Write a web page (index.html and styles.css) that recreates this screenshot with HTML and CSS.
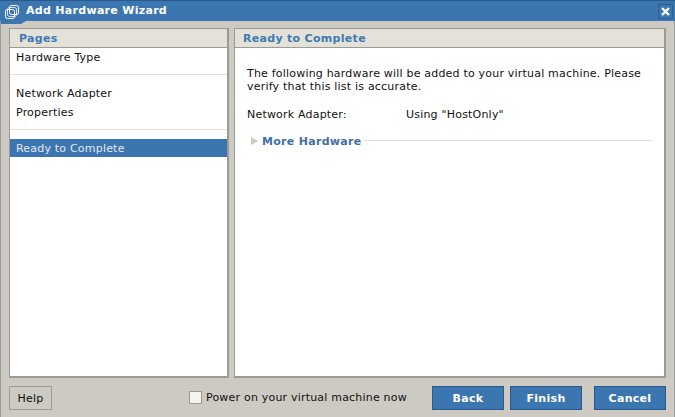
FILE: index.html
```html
<!DOCTYPE html>
<html lang="en">
<head>
  <meta charset="UTF-8">
  <title>Add Hardware Wizard</title>
  <link rel="stylesheet" href="styles.css">
</head>
<body>
  <div class="wizard">
    <div class="titlebar">
      <svg class="title-icon" width="15" height="15" viewBox="0 0 15 15">
        <rect x="0.5" y="4.5" width="9" height="9" rx="2" fill="none" stroke="#fff"/>
        <rect x="4.5" y="0.5" width="9" height="9" rx="2" fill="none" stroke="#fff"/>
        <rect x="2.5" y="2.5" width="9" height="9" rx="2" fill="none" stroke="#dfe8f2"/>
      </svg>
      <span class="title-text">Add Hardware Wizard</span>
      <span class="close-btn">
        <svg width="11" height="11" viewBox="0 0 11 11">
          <path d="M2 2 L9 9 M9 2 L2 9" stroke="#fff" stroke-width="2.4"/>
        </svg>
      </span>
    </div>
    <div class="title-notch"></div>

    <div class="panels">
      <div class="panel pages">
        <div class="panel-head">Pages</div>
        <div class="page-group group-type">
          <div class="page-item">Hardware Type</div>
        </div>
        <div class="page-group group-adapter">
          <div class="page-item">Network Adapter</div>
          <div class="page-item">Properties</div>
        </div>
        <div class="page-item selected">Ready to Complete</div>
      </div>

      <div class="panel content">
        <div class="panel-head head-right">Ready to Complete</div>
        <div class="content-body">
          <p class="intro">The following hardware will be added to your virtual machine. Please verify that this list is accurate.</p>
          <div class="summary-row">
            <span class="summary-label">Network Adapter:</span>
            <span>Using "HostOnly"</span>
          </div>
          <div class="more-row">
            <span class="more-arrow"></span>
            <span class="more-label">More Hardware</span>
            <span class="more-line"></span>
          </div>
        </div>
      </div>
    </div>

    <div class="footer">
      <button class="btn btn-help">Help</button>
      <label class="power-on">
        <span class="checkbox"></span>
        Power on your virtual machine now
      </label>
      <button class="btn btn-blue">Back</button>
      <button class="btn btn-blue btn-finish">Finish</button>
      <button class="btn btn-blue">Cancel</button>
    </div>
  </div>
</body>
</html>
```

FILE: styles.css
```css
html, body {
  margin: 0;
  padding: 0;
  height: 100%;
}
body {
  background: #cdcac3;
  font-family: "DejaVu Sans", Verdana, sans-serif;
  font-size: 11px;
  letter-spacing: 0.2px;
  color: #111;
  overflow: hidden;
}
.wizard {
  display: flex;
  flex-direction: column;
  height: 417px;
  box-sizing: border-box;
  border-left: 1px solid #9a9a96;
  border-right: 1px solid #9a9a96;
  position: relative;
}

/* title bar */
.titlebar {
  display: flex;
  align-items: center;
  height: 20px;
  margin: 0 -1px;
  background: #3c76b1;
  border-top: 1px solid #2a5a8c;
  color: #fff;
  font-weight: bold;
  font-size: 11px;
  padding-left: 5px;
}
.title-icon {
  margin-right: 6px;
  margin-top: 3px;
  flex: none;
}
.title-text {
  flex: 1;
  letter-spacing: 0.3px;
  margin-top: -2px;
}
.close-btn {
  display: flex;
  align-items: center;
  justify-content: center;
  width: 15px;
  height: 15px;
  margin-right: 2px;
  border: 1px solid #2d5f92;
  box-sizing: border-box;
}
.title-notch {
  position: absolute;
  left: 0;
  top: 21px;
  width: 25px;
  height: 3px;
  background: #3c76b1;
  clip-path: polygon(0 0, 100% 0, 80% 100%, 0 100%);
}

/* panels */
.panels {
  display: flex;
  gap: 5px;
  height: 350px;
  margin: 7px 8px 0 8px;
}
.panel {
  background: #fff;
  border: 2px solid #9a9a96;
  border-width: 1px 2px 2px 1px;
  box-sizing: border-box;
}
.pages {
  width: 220px;
  flex: none;
}
.content {
  flex: 1;
}
.panel-head {
  height: 18px;
  line-height: 19px;
  background: #e4e1d9;
  border-bottom: 1px solid #9a9a96;
  color: #4179b3;
  font-weight: bold;
  letter-spacing: 0.3px;
  padding-left: 9px;
}
.head-right {
  padding-left: 8px;
}

/* page list */
.page-item {
  height: 19px;
  line-height: 19px;
  padding-left: 6px;
}
.page-group {
  border-bottom: 1px solid #e4e1d9;
}
.group-type {
  padding-bottom: 7px;
  margin-bottom: 9px;
}
.group-adapter {
  padding-bottom: 7px;
  margin-bottom: 9px;
}
.page-item.selected {
  height: 18px;
  line-height: 19px;
  background: #3c76b1;
  color: #e4e8ee;
}

/* right side */
.content-body {
  padding: 19px 12px 0 12px;
}
.intro {
  margin: 0;
  line-height: 13px;
}
.summary-row {
  display: flex;
  margin-top: 15px;
  line-height: 14px;
}
.summary-label {
  width: 159px;
}
.more-row {
  display: flex;
  align-items: center;
  margin-top: 12px;
  margin-right: -1px;
  height: 14px;
}
.more-arrow {
  width: 0;
  height: 0;
  margin-left: 4px;
  margin-right: 4px;
  border-left: 7px solid #cdcac3;
  border-top: 4px solid transparent;
  border-bottom: 4px solid transparent;
}
.more-label {
  color: #3f6fa3;
  font-weight: bold;
  letter-spacing: 0.3px;
}
.more-line {
  flex: 1;
  height: 1px;
  margin-left: 1px;
  margin-top: -1px;
  background: #e4e1d9;
}

/* footer */
.footer {
  display: flex;
  align-items: center;
  margin: 8px 8px 0 8px;
}
.btn {
  height: 24px;
  box-sizing: border-box;
  font-family: "DejaVu Sans", Verdana, sans-serif;
  font-size: 11px;
  letter-spacing: 0.2px;
  padding: 0;
}
.btn-help {
  width: 43px;
  background: #cdcac3;
  color: #111;
  border: 1px solid #9a9a96;
}
.btn-blue {
  width: 72px;
  background: #3c76b1;
  border: 1px solid #2a5a8c;
  color: #fff;
  font-weight: bold;
  letter-spacing: 0.3px;
}
.btn-finish {
  margin: 0 12px 0 6px;
}
.power-on {
  display: flex;
  align-items: center;
  margin-left: 137px;
  margin-right: 24px;
  margin-top: -2px;
  flex: 1;
  white-space: nowrap;
}
.checkbox {
  width: 13px;
  height: 13px;
  box-sizing: border-box;
  margin-right: 4px;
  background: #f5f3ec;
  border: 1px solid #9a9a96;
}
```
